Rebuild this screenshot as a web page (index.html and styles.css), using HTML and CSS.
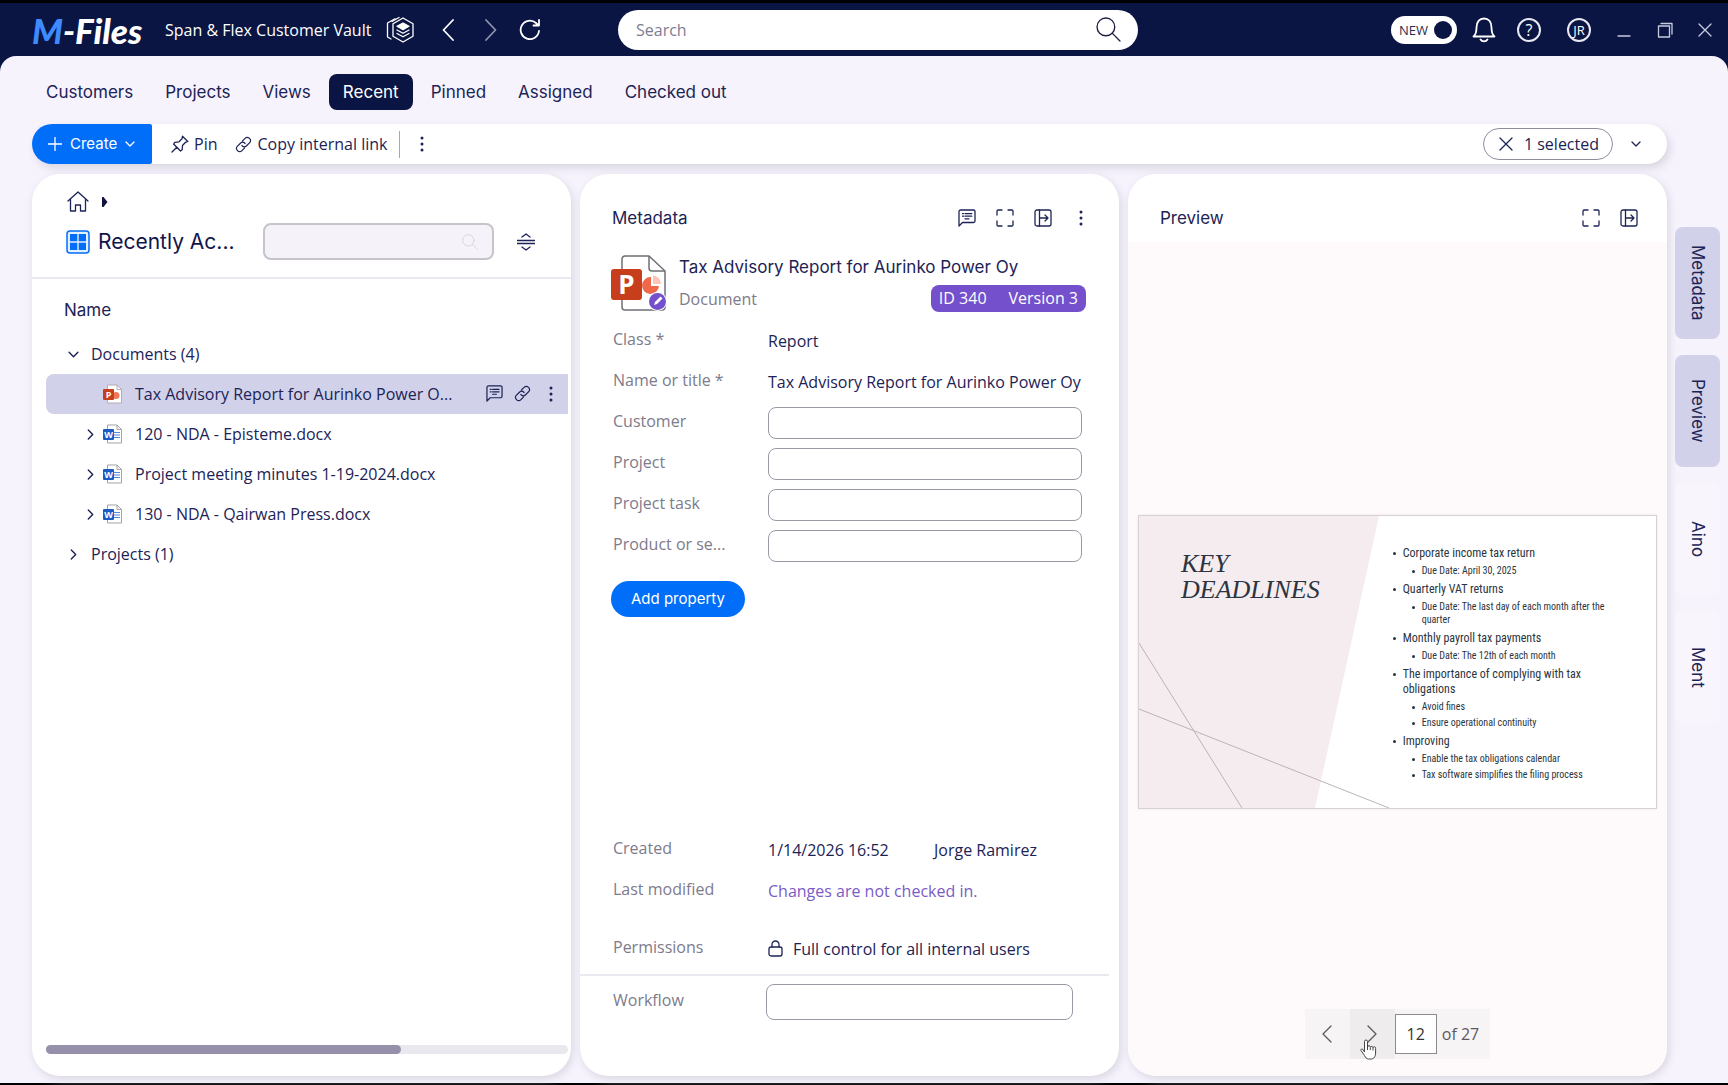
FILE: index.html
```html
<!DOCTYPE html>
<html lang="en">
<head>
<meta charset="utf-8">
<title>M-Files - Span &amp; Flex Customer Vault</title>
<link rel="stylesheet" href="styles.css">
</head>
<body>
<svg class="sprite" aria-hidden="true">
  <symbol id="i-dots" viewBox="0 0 18 18"><g fill="currentColor" stroke="none"><circle cx="9" cy="3" r="1.5"/><circle cx="9" cy="9" r="1.5"/><circle cx="9" cy="15" r="1.5"/></g></symbol>
  <symbol id="i-link" viewBox="0 0 18 18"><path d="M8 5.2l2.9-2.9a2.9 2.9 0 0 1 4.2 0l.5.5a2.9 2.9 0 0 1 0 4.2l-3.6 3.6a2.9 2.9 0 0 1-4.2 0l-.5-.6M10 12.8l-2.9 2.9a2.9 2.9 0 0 1-4.2 0l-.5-.5a2.9 2.9 0 0 1 0-4.2L6 7.4a2.9 2.9 0 0 1 4.2 0l.5.6"/></symbol>
  <symbol id="i-comment" viewBox="0 0 18 18"><path d="M1 17V2.5A1.5 1.5 0 0 1 2.500 1h13A1.500 1.500 0 0 1 17 2.500v9.500a1.500 1.500 0 0 1-1.500 1.500H4.500z"/><path d="M4.500 4.600h1M7 4.600h6.800M4.500 7.200h1M7 7.200h6.800M7 9.800h4"/></symbol>
  <symbol id="i-expand" viewBox="0 0 18 18"><path d="M1 6V2.200A1.200 1.200 0 0 1 2.200 1H6M12 1h3.800A1.200 1.200 0 0 1 17 2.200V6M17 12v3.800a1.200 1.200 0 0 1-1.200 1.200H12M6 17H2.200A1.200 1.200 0 0 1 1 15.800V12"/></symbol>
  <symbol id="i-dock" viewBox="0 0 18 18"><rect x="1" y="1" width="16" height="16" rx="2"/><path d="M5.500 1v16M5.500 9h8.500M11 6l3 3-3 3"/></symbol>
  <symbol id="i-down" viewBox="0 0 10 10"><path d="M1 3l4 4 4-4"/></symbol>
  <symbol id="i-right" viewBox="0 0 10 10"><path d="M3 1l4 4-4 4"/></symbol>
  <symbol id="i-x" viewBox="0 0 14 14"><path d="M1 1l12 12M13 1L1 13"/></symbol>
  <symbol id="i-search" viewBox="0 0 24 24"><circle cx="9.500" cy="9.500" r="8.500"/><path d="M15.500 15.500l7.500 7.500"/></symbol>
  <symbol id="i-word" viewBox="0 0 20 20"><path d="M4.500 1h9.500l4.500 4.500v13.500h-14z" fill="#fff" stroke="#a3a3a8"/><path d="M14 1v4.500h4.500" fill="none" stroke="#a3a3a8"/><path d="M11 8.500h6M11 11h6M11 13.500h6" stroke="#4e8be0"/><rect x="0" y="5" width="11" height="11" rx="1" fill="#1a5bc4" stroke="none"/><text x="5.500" y="13.500" class="glyph glyph-s">W</text></symbol>
</svg>

<div class="app">
  <header class="topbar">
    <a class="logo" href="#"><span class="logo-m">M</span>-Files</a>
    <span class="vault">Span &amp; Flex Customer Vault</span>
    <button class="icon-btn vault-btn" aria-label="Vaults"><svg width="28" height="28" viewBox="0 0 28 28" class="ic"><path d="M9 2.800L1.500 7v14l3.500 2"/><path d="M13 1.500l-7 4"/><path d="M17 2l10 5.800v12.400L17 26 7 20.200V7.800z"/><path d="M17 7l6 3.300-6 3.300-6-3.300z" fill="#fff"/><path d="M11 14l6 3.300 6-3.300M11 17.500l6 3.300 6-3.300"/></svg></button>
    <button class="icon-btn nav-back" aria-label="Back"><svg width="12" height="22" viewBox="0 0 12 22" class="ic w2"><path d="M11 1L1.500 11 11 21"/></svg></button>
    <button class="icon-btn nav-fwd" aria-label="Forward"><svg width="12" height="22" viewBox="0 0 12 22" class="ic w2"><path d="M1 1l9.500 10L1 21"/></svg></button>
    <button class="icon-btn" aria-label="Refresh"><svg width="22" height="22" viewBox="0 0 22 22" class="ic w2"><path d="M20 12a9.200 9.200 0 1 1-3-8l2 2M20 1v5.500h-5.500"/></svg></button>
    <form class="search">
      <input type="text" placeholder="Search" aria-label="Search">
      <button class="icon-btn" type="button" aria-label="Run search"><svg width="25" height="25" class="ic"><use href="#i-search"/></svg></button>
    </form>
    <div class="top-right">
      <button class="new-toggle" aria-label="New experience"><span>NEW</span><i></i></button>
      <button class="icon-btn bell" aria-label="Notifications"><svg width="24" height="26" viewBox="0 0 24 26" class="ic w2"><path d="M1.500 19.500c2.500-2 3-4 3-9C4.500 5 7.500 1.500 12 1.500S19.500 5 19.500 10.500c0 5 .5 7 3 9z"/><path d="M8.500 22.500c1.500 2.500 5.500 2.500 7 0"/></svg></button>
      <button class="ring help" aria-label="Help">?</button>
      <button class="ring user" aria-label="Account">JR</button>
      <button class="icon-btn win" aria-label="Minimize"><svg width="16" height="16" class="ic"><path d="M2 14h12"/></svg></button>
      <button class="icon-btn win" aria-label="Restore"><svg width="16" height="16" class="ic"><path d="M1.500 4h11v11h-11zM4 1.500h11V12"/></svg></button>
      <button class="icon-btn win" aria-label="Close"><svg width="14" height="14" class="ic"><use href="#i-x"/></svg></button>
    </div>
  </header>

  <div class="shell">
    <nav class="tabs">
      <a href="#">Customers</a><a href="#">Projects</a><a href="#">Views</a><a href="#" class="active">Recent</a><a href="#">Pinned</a><a href="#">Assigned</a><a href="#">Checked out</a>
    </nav>
    <div class="workspace">
      <main class="content">
        <div class="toolbar">
          <button class="create"><svg width="14" height="14" class="ic"><path d="M7 0v14M0 7h14"/></svg>Create<svg width="10" height="10" class="ic"><use href="#i-down"/></svg></button>
          <button class="tool"><svg width="18" height="18" viewBox="0 0 18 18" class="ic"><path d="M1 17l4.800-4.800M11.500 1.200l5.300 5.300-2.300.8-3 3.200-.3 4.300-1.700 1.200L2.600 9l1.200-1.700 4.200-.5 3-3z"/></svg>Pin</button>
          <button class="tool"><svg width="17" height="17" class="ic"><use href="#i-link"/></svg>Copy internal link</button>
          <span class="rule"></span>
          <button class="icon-btn" aria-label="More"><svg width="18" height="18" class="ic"><use href="#i-dots"/></svg></button>
          <button class="selected-pill"><svg width="14" height="14" class="ic"><use href="#i-x"/></svg>1 selected</button>
          <button class="icon-btn drop" aria-label="Selection options"><svg width="10" height="10" class="ic"><use href="#i-down"/></svg></button>
        </div>

        <div class="cards">
          <section class="card listing">
            <div class="listing-head">
              <div class="crumb">
                <svg width="22" height="21" viewBox="0 0 22 21" class="ic"><path d="M1 10L11 1l10 9M3.500 8v12h5v-6h5v6h5V8"/></svg>
                <svg width="6" height="10" viewBox="0 0 6 10"><path d="M0 0h1.500L5.500 5 1.500 10H0z" fill="#11143f"/></svg>
              </div>
              <div class="title-row">
                <svg width="24" height="24" viewBox="0 0 24 24"><rect x="1" y="1" width="22" height="22" rx="3" fill="#e3f0ff" stroke="#006ef8" stroke-width="1.500"/><path d="M4 4h7.300v7.300H4zM12.700 4H20v7.300h-7.300zM4 12.700h7.300V20H4zM12.700 12.700H20V20h-7.300z" fill="#006ef8"/></svg>
                <h1>Recently Ac...</h1>
                <div class="filter"><input type="text" aria-label="Filter list"><svg width="16" height="16" class="ic"><use href="#i-search"/></svg></div>
                <button class="icon-btn" aria-label="Collapse header"><svg width="18" height="18" viewBox="0 0 18 18" class="ic"><path d="M0 7.500h18M0 10.500h18M5 4L9 1l4 3M5 14L9 17l4-3"/></svg></button>
              </div>
            </div>
            <h2 class="col-name">Name</h2>
            <ul class="tree">
              <li class="group"><svg width="11" height="11" class="ic"><use href="#i-down"/></svg>Documents (4)</li>
              <li class="item current"><i class="twist"></i>
                <svg width="20" height="20" viewBox="0 0 20 20"><path d="M4.500 1h9.500l4.500 4.500v13.500h-14z" fill="#fff" stroke="#b9a9b4"/><path d="M14 1v4.500h4.500" fill="none" stroke="#b9a9b4"/><circle cx="13" cy="11.500" r="3.500" fill="#f0775a"/><rect y="5" width="11" height="11" rx="1" fill="#c73e1d"/><text x="5.500" y="13.800" class="glyph glyph-s">P</text></svg>
                <span class="name">Tax Advisory Report for Aurinko Power O...</span>
                <span class="acts"><svg width="17" height="17" class="ic"><use href="#i-comment"/></svg><svg width="17" height="17" class="ic"><use href="#i-link"/></svg><svg width="18" height="18" class="ic"><use href="#i-dots"/></svg></span>
              </li>
              <li class="item"><i class="twist"><svg width="11" height="11" class="ic"><use href="#i-right"/></svg></i><svg width="20" height="20"><use href="#i-word"/></svg><span class="name">120 - NDA - Episteme.docx</span></li>
              <li class="item"><i class="twist"><svg width="11" height="11" class="ic"><use href="#i-right"/></svg></i><svg width="20" height="20"><use href="#i-word"/></svg><span class="name">Project meeting minutes 1-19-2024.docx</span></li>
              <li class="item"><i class="twist"><svg width="11" height="11" class="ic"><use href="#i-right"/></svg></i><svg width="20" height="20"><use href="#i-word"/></svg><span class="name">130 - NDA - Qairwan Press.docx</span></li>
              <li class="group"><svg width="11" height="11" class="ic"><use href="#i-right"/></svg>Projects (1)</li>
            </ul>
            <div class="scroll"><div class="thumb"></div></div>
          </section>

          <section class="card meta">
            <div class="card-head">
              <h2>Metadata</h2>
              <button class="icon-btn" aria-label="Comments"><svg width="18" height="18" class="ic"><use href="#i-comment"/></svg></button>
              <button class="icon-btn" aria-label="Full screen"><svg width="18" height="18" class="ic"><use href="#i-expand"/></svg></button>
              <button class="icon-btn" aria-label="Hide pane"><svg width="18" height="18" class="ic"><use href="#i-dock"/></svg></button>
              <button class="icon-btn" aria-label="More"><svg width="18" height="18" class="ic"><use href="#i-dots"/></svg></button>
            </div>
            <div class="object">
              <svg width="56" height="56" viewBox="0 0 56 56"><path d="M11 52V4a3 3 0 0 1 3-3h24l16 15v36a3 3 0 0 1-3 3H14a3 3 0 0 1-3-3z" fill="#fff" stroke="#6f6f76" stroke-width="1.500"/><path d="M38 1v12a3 3 0 0 0 3 3h13" fill="none" stroke="#6f6f76" stroke-width="1.500"/><path d="M40 22v9h8a8.500 8.500 0 1 1-8-9z" fill="#f0684a"/><path d="M42 20.500a8.500 8.500 0 0 1 8 8.500h-8z" fill="#ffc4b8"/><rect x="0" y="14" width="31" height="31" rx="3" fill="#c73e1d"/><text x="15.500" y="39" class="glyph glyph-l">P</text><circle cx="46.500" cy="46.500" r="9.500" fill="#fff"/><circle cx="46.500" cy="46.500" r="8.500" fill="#7450cd"/><path d="M43 50l1-3 5.500-5.500 2 2L46 49z" fill="#fff"/></svg>
              <div class="object-text">
                <h3>Tax Advisory Report for Aurinko Power Oy</h3>
                <div class="sub"><span>Document</span><span class="badge"><b>ID 340</b><b>Version 3</b></span></div>
              </div>
            </div>
            <div class="fields">
              <div class="field"><span class="lab">Class *</span><span class="val">Report</span></div>
              <div class="field"><span class="lab">Name or title *</span><span class="val">Tax Advisory Report for Aurinko Power Oy</span></div>
              <div class="field"><label for="f1">Customer</label><input type="text" id="f1"></div>
              <div class="field"><label for="f2">Project</label><input type="text" id="f2"></div>
              <div class="field"><label for="f3">Project task</label><input type="text" id="f3"></div>
              <div class="field"><label for="f4">Product or se...</label><input type="text" id="f4"></div>
            </div>
            <button class="add">Add property</button>
            <div class="audit">
              <div class="field"><span class="lab">Created</span><span class="val split"><span>1/14/2026 16:52</span><span>Jorge Ramirez</span></span></div>
              <div class="field"><span class="lab">Last modified</span><span class="val note">Changes are not checked in.</span></div>
              <div class="field perm"><span class="lab">Permissions</span><span class="val lock"><svg width="15" height="17" viewBox="0 0 15 17" class="ic"><rect x="1" y="7" width="13" height="9" rx="2"/><path d="M4 7V4.500a3.500 3.500 0 0 1 7 0V7"/></svg>Full control for all internal users</span></div>
            </div>
            <div class="workflow"><label for="wf">Workflow</label><input type="text" id="wf"></div>
          </section>

          <section class="card preview">
            <div class="card-head">
              <h2>Preview</h2>
              <button class="icon-btn" aria-label="Full screen"><svg width="18" height="18" class="ic"><use href="#i-expand"/></svg></button>
              <button class="icon-btn" aria-label="Hide pane"><svg width="18" height="18" class="ic"><use href="#i-dock"/></svg></button>
            </div>
            <div class="stage">
              <article class="slide">
                <svg class="slide-art" viewBox="0 0 517 292" preserveAspectRatio="none"><path d="M0 0h240l-64 292H0z" fill="#f4ecee"/><path d="M0 127l103 165M0 193l250 99" fill="none" stroke="#bdb3b5"/></svg>
                <h4>KEY<br>DEADLINES</h4>
                <ul class="points">
                  <li>Corporate income tax return<ul><li>Due Date: April 30, 2025</li></ul></li>
                  <li>Quarterly VAT returns<ul><li>Due Date: The last day of each month after the<br>quarter</li></ul></li>
                  <li>Monthly payroll tax payments<ul><li>Due Date: The 12th of each month</li></ul></li>
                  <li>The importance of complying with tax<br>obligations<ul><li>Avoid fines</li><li>Ensure operational continuity</li></ul></li>
                  <li>Improving<ul><li>Enable the tax obligations calendar</li><li>Tax software simplifies the filing process</li></ul></li>
                </ul>
              </article>
              <div class="pager">
                <button class="page-btn" aria-label="Previous page"><svg width="10" height="18" viewBox="0 0 10 18" class="ic"><path d="M9 1L1 9l8 8"/></svg></button>
                <button class="page-btn hover" aria-label="Next page"><svg width="10" height="18" viewBox="0 0 10 18" class="ic"><path d="M1 1l8 8-8 8"/></svg>
                  <svg class="hand" width="17" height="21" viewBox="0 0 17 21"><path d="M4.500 13V2.500a1.500 1.500 0 0 1 3 0V8a1.400 1.400 0 0 1 2.800.3 1.400 1.400 0 0 1 2.700.5 1.300 1.300 0 0 1 2.600.7V14c0 3-1.500 6-4.500 6H8.500c-2 0-3-1.500-4-3.500L1 11.500c-.5-1.500 1-2 2-1z" fill="#fff" stroke="#444"/><path d="M7.500 8v3M10.300 8.500V11M13 9v2.500" stroke="#444"/></svg></button>
                <input type="text" value="12" aria-label="Page number">
                <span>of 27</span>
              </div>
            </div>
          </section>
        </div>
      </main>
      <nav class="rail">
        <a href="#" class="on">Metadata</a><a href="#" class="on">Preview</a><a href="#">Aino</a><a href="#">Ment</a>
      </nav>
    </div>
  </div>
</div>
</body>
</html>
```
FILE: styles.css
```css
* { box-sizing: border-box; }
body, h1, h2, h3, h4, ul { margin: 0; padding: 0; font-weight: 400; }
ul { list-style: none; }
a { color: inherit; text-decoration: none; }
button, input { font: inherit; color: inherit; border: 0; margin: 0; padding: 0; background: none; }
body { background: #000; color: #1d2355; font: 16px/24px "Open Sans", "Noto Sans", sans-serif; }
.sprite { display: none; }
svg { display: block; flex: none; }
.ic { fill: none; stroke: currentColor; stroke-width: 1.3; stroke-linecap: round; stroke-linejoin: round; }
.w2 { stroke-width: 1.8; }
.icon-btn { display: flex; align-items: center; justify-content: center; flex: none; }
.glyph { fill: #fff; stroke: none; font-family: "Open Sans", sans-serif; font-weight: 700; text-anchor: middle; }
.glyph-s { font-size: 9px; }
.glyph-l { font-size: 26px; }

.app { display: flex; flex-direction: column; min-height: 100vh; border-top: 3px solid #000; border-bottom: 2px solid #000; background: #0a1543; }

/* Title bar */
.topbar { display: flex; align-items: center; height: 53px; padding: 0 16px 0 32px; color: #fff; }
.logo { font: italic 900 35px/40px Lato, sans-serif; width: 133px; }
.logo-m { color: #3d8bff; }
.vault { width: 221px; font-size: 16px; white-space: nowrap; }
.vault-btn { margin-right: 28px; }
.nav-back { margin-right: 31px; }
.nav-fwd { margin-right: 22px; color: #8f93b0; }
.search { display: flex; align-items: center; width: 520px; height: 40px; margin: 0 auto 0 77px; padding: 0 17px 0 18px; border-radius: 20px; background: #fff; color: #1d1f45; }
.search input { flex: 1; outline: 0; }
.search input::placeholder { color: #7f7d92; opacity: 1; }
.top-right { display: flex; align-items: center; }
.new-toggle { display: flex; align-items: center; justify-content: space-between; width: 66px; height: 28px; padding: 0 5px 0 8px; border-radius: 14px; background: #fff; color: #2b2d55; font-size: 13px; }
.new-toggle i { width: 18px; height: 18px; border-radius: 50%; background: #0a1543; }
.bell { margin: 0 21px 0 15px; }
.ring { display: flex; align-items: center; justify-content: center; width: 24px; height: 24px; border: 2px solid #e8e8f2; border-radius: 50%; font-size: 16px; line-height: 16px; }
.help { margin-right: 26px; }
.user { margin-right: 25px; font-size: 13px; }
.win { margin-right: 25px; color: #c9cbe0; }
.win:last-child { margin-right: 0; }

/* Page */
.shell { flex: 1; display: flex; flex-direction: column; border-radius: 16px 16px 0 0; background: #f6f3fd; padding: 18px 8px 7px 32px; }
.tabs { display: flex; gap: 4px; margin-bottom: 14px; font: 17px/36px Inter, sans-serif; }
.tabs a { padding: 0 14px; border-radius: 8px; }
.tabs .active { background: #0a1543; color: #fff; }
.workspace { flex: 1; display: flex; gap: 8px; }
.content { flex: 1; display: flex; flex-direction: column; gap: 10px; min-width: 0; }

.toolbar { display: flex; align-items: center; height: 40px; padding-right: 26px; border-radius: 20px; background: #fff; box-shadow: 3px 4px 8px #d9d6e0; }
.create { display: flex; align-items: center; gap: 8px; width: 120px; height: 40px; padding-left: 16px; margin-right: 19px; border-radius: 20px 2px 2px 20px; background: #006ef8; color: #fff; font: 15px/24px Inter, sans-serif; }
.tool { display: flex; align-items: center; gap: 5px; margin-right: 18px; white-space: nowrap; }
.rule { width: 1px; height: 27px; background: #a9a7b5; margin: 0 13px 0 -6px; }
.selected-pill { display: flex; align-items: center; gap: 11px; height: 32px; margin-left: auto; margin-right: 18px; padding: 0 13px 0 15px; border: 1px solid #908d9f; border-radius: 16px; white-space: nowrap; }

.cards { flex: 1; display: grid; grid-template-columns: repeat(3, minmax(0, 1fr)); gap: 9px; }
.card { display: flex; flex-direction: column; border-radius: 28px; background: #fff; box-shadow: 2px 3px 9px #d9d6e0; overflow: hidden; }

/* Listing */
.listing-head { padding: 17px 36px 17px 34px; border-bottom: 2px solid #ebe9f0; }
.crumb { display: flex; align-items: center; gap: 13px; height: 21px; padding-left: 1px; }
.title-row { display: flex; align-items: center; margin-top: 11px; height: 37px; }
h1 { flex: none; width: 173px; padding-left: 8px; font: 21px/32px Inter, sans-serif; color: #11154a; white-space: nowrap; }
.filter { display: flex; align-items: center; flex: 1; min-width: 0; height: 37px; margin-right: 23px; padding-right: 14px; border: 2px solid #c6c3ca; border-radius: 8px; background: #f5f2f9; color: #d5d2dc; }
.filter input { flex: 1; min-width: 0; }
.col-name { padding: 18px 32px 11px; font: 17px/26px Inter, sans-serif; }
.tree { padding-left: 14px; margin-right: 3px; }
.group { display: flex; align-items: center; gap: 12px; height: 40px; padding-left: 22px; }
.item { display: flex; align-items: center; height: 40px; padding-left: 39px; border-radius: 8px 0 0 8px; white-space: nowrap; }
.item .twist { width: 18px; }
.item .name { padding-left: 12px; }
.current { background: #d1d1ea; }
.acts { display: flex; gap: 11px; margin-left: auto; padding-right: 8px; }
.scroll { height: 9px; margin: auto 3px 22px 14px; border-radius: 5px; background: #eae8ef; }
.thumb { width: 68%; height: 9px; border-radius: 5px; background: #9690aa; }

/* Metadata */
.card-head { display: flex; align-items: center; gap: 20px; height: 68px; padding: 19px 29px 0 32px; }
.card-head h2 { flex: 1; font: 17px/26px Inter, sans-serif; }
.object { display: flex; gap: 12px; padding: 13px 33px 8px 31px; }
.object-text { flex: 1; white-space: nowrap; }
h3 { font: 17px/24px Inter, sans-serif; }
.sub { display: flex; align-items: center; justify-content: space-between; margin-top: 6px; color: #7d7b8c; }
.badge { display: flex; gap: 22px; padding: 0 8px; height: 27px; border-radius: 8px; background: #7450cd; color: #fff; line-height: 27px; }
.badge b { font-weight: 400; }
.field { display: grid; grid-template-columns: 155px 1fr; align-items: center; height: 41px; padding: 0 37px 0 33px; white-space: nowrap; }
.lab, label { color: #7d7b8c; padding-bottom: 4px; }
.field input { height: 32px; }
.field input, .workflow input { width: 100%; border: 1px solid #9c99a6; border-radius: 8px; padding: 0 8px; }
.add { align-self: flex-start; height: 36px; margin: 15px 31px 0; padding: 0 20px; border-radius: 18px; background: #006ef8; color: #fff; font: 15px/24px Inter, sans-serif; }
.audit { margin: auto 10px 0 0; padding-bottom: 5px; border-bottom: 2px solid #ebe9f0; }
.split { display: grid; grid-template-columns: 166px 1fr; }
.note { color: #7a5cc8; }
.perm { margin-top: 17px; }
.lock { display: flex; align-items: center; gap: 10px; }
.workflow { display: grid; grid-template-columns: 153px 1fr; align-items: center; padding: 8px 46px 56px 33px; }
.workflow input { height: 36px; }

/* Preview */
.stage { flex: 1; position: relative; display: flex; align-items: center; padding: 6px 11px 0; background: #fefafc; }
.slide { position: relative; display: grid; grid-template-columns: 51% 1fr; width: 100%; aspect-ratio: 517 / 292; background: #fff; outline: 1px solid #d8d2d5; box-shadow: 0 0 3px #ccc6ca; color: #2b3440; }
.slide-art { position: absolute; inset: 0; width: 100%; height: 100%; }
h4 { position: relative; padding: 35px 0 0 42px; font: italic 26px/26px "Liberation Serif", serif; }
.points { position: relative; padding-top: 30px; font: 12px/15px "Roboto Condensed", "Liberation Sans Narrow", Roboto, sans-serif; white-space: nowrap; }
.points li { position: relative; margin-bottom: 5px; }
.points li::before { content: ""; position: absolute; left: -10px; top: 6px; width: 3px; height: 3px; border-radius: 50%; background: #2b3440; }
.points ul { padding: 3px 0 0 19px; font-size: 10px; line-height: 13px; }
.points ul li { margin-bottom: 3px; }
.pager { position: absolute; left: 0; right: 0; bottom: 17px; width: max-content; margin: 0 auto; display: flex; align-items: center; height: 50px; padding-right: 11px; background: #f7f4f5; color: #5c5960; }
.page-btn { position: relative; display: flex; align-items: center; justify-content: center; width: 45px; height: 50px; }
.page-btn.hover { background: #efecee; }
.hand { position: absolute; left: 10px; bottom: -1px; }
.pager input { width: 42px; height: 40px; margin-right: 5px; border: 1px solid #8c898f; background: #fff; text-align: center; color: #333; }

/* Side rail */
.rail { display: flex; flex-direction: column; gap: 16px; width: 45px; padding-top: 103px; font: 17px/45px Inter, sans-serif; }
.rail a { display: flex; align-items: center; justify-content: center; writing-mode: vertical-rl; height: 112px; border-radius: 8px; background: #f8f5fc; }
.rail .on { background: #d1d1ea; }
```
